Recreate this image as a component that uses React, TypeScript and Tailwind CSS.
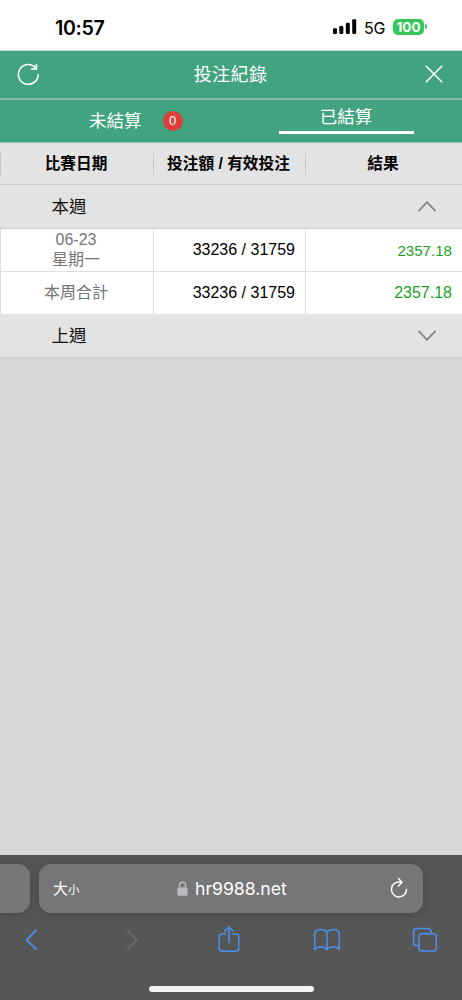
import type { ReactNode } from 'react'
import clsx from 'clsx'

interface BetRow {
  label: string[]
  stake: string
  result: string
  small?: boolean
}

const ROWS: BetRow[] = [
  { label: ['06-23', '星期一'], stake: '33236 / 31759', result: '2357.18', small: true },
  { label: ['本周合計'], stake: '33236 / 31759', result: '2357.18' },
]

function StatusBar() {
  return (
    <div className="flex h-[51px] items-center border-b border-[#c4dfd5] bg-white pt-[6px] text-black">
      <span className="ml-[55px] w-[278px] font-['Inter'] text-[19.6px] leading-6 font-semibold tracking-[-0.3px]">
        10:57
      </span>
      <svg width="24" height="16" viewBox="0 0 24 16" className="-mt-[2px]">
        <rect x="0" y="9.3" width="4" height="5.7" rx="1.2" />
        <rect x="6.3" y="7" width="4" height="8" rx="1.2" />
        <rect x="12.8" y="3.7" width="4" height="11.3" rx="1.2" />
        <rect x="19.2" y="0.3" width="4" height="14.7" rx="1.2" />
      </svg>
      <span className="ml-[7px] w-[29px] font-['Inter'] text-[16px] leading-5 tracking-[-0.3px]">5G</span>
      <span className="-mt-[3px] flex h-4 w-[31px] items-center justify-center rounded-[5px] bg-[#34c759] font-['Inter'] text-[13.5px] leading-4 font-bold text-white">
        100
      </span>
      <span className="-mt-[3px] ml-px h-[5px] w-[2px] rounded-r-full bg-[#34c759]" />
    </div>
  )
}

function Header() {
  return (
    <header className="flex h-[49px] items-center justify-between border-b-2 border-[#93b8aa] bg-[#41a380] pr-[19px] pl-[17px] text-white">
      <svg width="23" height="23" viewBox="0 0 23 23" fill="none" stroke="currentColor" strokeWidth="1.6" className="-mt-px">
        <path d="M21.2 11.3A9.9 9.9 0 1 1 18.7 4.8" />
        <path d="M14.2 5.9h5.2V1" />
      </svg>
      <h1 className="-ml-[4px] text-[18px] leading-6 tracking-[0.4px]">投注紀錄</h1>
      <svg width="18" height="18" viewBox="0 0 18 18" fill="none" stroke="currentColor" strokeWidth="1.6" className="-mt-px">
        <path d="M0.8 0.8l16.4 16.4M17.2 0.8L0.8 17.2" />
      </svg>
    </header>
  )
}

function Tabs() {
  return (
    <nav className="flex h-[43px] border-b border-[#8cc5b0] bg-[#41a380] text-[17.5px] leading-6 text-white">
      <div className="flex w-1/2 items-center pl-[89px]">
        <span className="-mt-px">未結算</span>
        <span className="ml-[21px] flex size-[20px] items-center justify-center rounded-full bg-[#dc3f3a] text-[13px]">
          0
        </span>
      </div>
      <div className="flex w-1/2 flex-col items-center pt-[5px]">
        <span className="pr-px">已結算</span>
        <span className="mt-[2px] h-[3px] w-[135px] bg-white" />
      </div>
    </nav>
  )
}

function TableHead() {
  return (
    <div className="flex h-[42px] border-b border-[#cbcbcb] bg-[#e3e3e3] pt-[10px] text-[15.7px] leading-[22px] font-bold text-black">
      <div className="h-[22px] w-[153px] border-l border-[#c6c6c6] pr-[2px] text-center">比賽日期</div>
      <div className="h-[22px] w-[152px] border-l border-[#c6c6c6] pr-[2px] text-center whitespace-nowrap">
        投注額 / 有效投注
      </div>
      <div className="h-[22px] w-[157px] border-l border-[#c6c6c6] pr-[2px] text-center">結果</div>
    </div>
  )
}

function WeekBar({ title, open }: { title: string; open?: boolean }) {
  return (
    <div className="flex h-[44px] items-center justify-between border-b border-[#cbcbcb] bg-[#e3e3e3] pr-[26px] pl-[51.500px]">
      <span className="text-[17.5px] leading-6 text-[#111]">{title}</span>
      <svg width="18" height="11" viewBox="0 0 18 11" fill="none" stroke="#858585" strokeWidth="1.8">
        <path d={open ? 'M0.5 10L9 1.2l8.5 8.8' : 'M0.5 1L9 9.8l8.5-8.8'} />
      </svg>
    </div>
  )
}

function BetTable() {
  return (
    <div className="bg-white text-[16px]">
      {ROWS.map((row, i) => (
        <div key={i} className={clsx('flex', i === 0 ? 'h-[43px] border-b border-[#dedede]' : 'h-[42px]')}>
          <div className="flex w-[153px] flex-col items-center justify-center border-l border-[#dcdcdc] pr-[2px] leading-[20px] text-[#757575]">
            {row.label.map((line) => (
              <span key={line}>{line}</span>
            ))}
          </div>
          <div className="flex w-[152px] items-center justify-end border-l border-[#dedede] pr-[10px] text-black">
            {row.stake}
          </div>
          <div
            className={clsx(
              'flex w-[157px] items-center justify-end border-l border-[#dedede] pr-[10px] text-[#1b9f1b]',
              row.small && 'pt-[2px] text-[15.1px]'
            )}
          >
            {row.result}
          </div>
        </div>
      ))}
    </div>
  )
}

function ToolIcon({ children, className }: { children: ReactNode; className?: string }) {
  return (
    <svg
      width="28"
      height="30"
      viewBox="0 0 28 30"
      fill="none"
      stroke="currentColor"
      strokeWidth="1.5"
      strokeLinecap="round"
      strokeLinejoin="round"
      className={className}
    >
      {children}
    </svg>
  )
}

function BrowserBar() {
  return (
    <footer className="h-[145px] overflow-hidden bg-[#565656]">
      <div className="flex gap-[9px] pt-[9px]">
        <div className="h-[49px] w-[30px] rounded-r-[12px] bg-[#767676] shadow-[0_1px_10px_rgba(0,0,0,0.16)]" />
        <div className="flex h-[49px] w-[384px] items-center rounded-[12px] bg-[#767676] pr-[15px] pl-[14px] text-white shadow-[0_1px_10px_rgba(0,0,0,0.16)]">
          <span className="w-[124px] pt-px leading-5">
            <span className="text-[15px]">大</span>
            <span className="text-[11.5px]">小</span>
          </span>
          <svg width="11" height="15" viewBox="0 0 11 15" className="-mt-px">
            <path d="M2.5 7V4.2a3 3 0 0 1 6 0V7" fill="none" stroke="#bcbac1" strokeWidth="1.4" />
            <rect x="0.3" y="6.5" width="10.4" height="8.2" rx="1.5" fill="#bcbac1" />
          </svg>
          <span className="ml-[7px] font-['Inter'] text-[17.6px] leading-6">hr9988.net</span>
          <svg
            width="18"
            height="21"
            viewBox="0 0 18 21"
            fill="none"
            stroke="currentColor"
            strokeWidth="1.5"
            strokeLinecap="round"
            strokeLinejoin="round"
            className="-mt-[3px] ml-auto"
          >
            <path d="M11.3 5.3A7.5 7.5 0 1 0 16.5 12.400" />
            <path d="M8.400 1.600L12 5.300 8.400 9" />
          </svg>
        </div>
      </div>

      <div className="mt-[12px] flex h-[30px] text-[#4990f2]">
        <ToolIcon className="ml-[17px]">
          <path d="M19 5.500l-9.500 9.300 9.500 9.300" strokeWidth="1.8" />
        </ToolIcon>
        <ToolIcon className="ml-[73px] text-[#6c6c6c]">
          <path d="M9.500 5.500l9.500 9.300-9.500 9.300" strokeWidth="1.7" />
        </ToolIcon>
        <ToolIcon className="ml-[69px]">
          <path d="M10.500 9H7.200a3 3 0 0 0-3 3v11.200a3 3 0 0 0 3 3h13.600a3 3 0 0 0 3-3V12a3 3 0 0 0-3-3h-3.300" />
          <path d="M14 17.500V2.200M9.700 6.300L14 2l4.300 4.300" />
        </ToolIcon>
        <ToolIcon className="ml-[70px]">
          <path d="M14 7.200C11.500 3.700 4.500 3.700 1.700 7.200v17C4.500 21.300 11.500 21.300 14 24.600c2.500-3.300 9.500-3.300 12.300-.4v-17C23.500 3.700 16.500 3.700 14 7.200v17.400" />
        </ToolIcon>
        <ToolIcon className="ml-[70px]">
          <rect x="8" y="8.800" width="17.300" height="17.200" rx="2.800" />
          <path d="M8 20.600H5.400a2.800 2.800 0 0 1-2.800-2.800V6.300a2.800 2.800 0 0 1 2.800-2.800h11.700a2.800 2.800 0 0 1 2.800 2.800v2.500" />
        </ToolIcon>
      </div>
      <div className="mx-auto mt-[31px] h-[6px] w-[165px] rounded-full bg-[#f2f2f2]" />
    </footer>
  )
}

export default function App() {
  return (
    <div className="flex h-[1000px] w-[462px] flex-col overflow-hidden bg-[#d8d8d8] font-['Liberation_Sans','Noto_Sans_CJK_TC',sans-serif]">
      <StatusBar />
      <Header />
      <Tabs />
      <main className="flex-1">
        <TableHead />
        <WeekBar title="本週" open />
        <BetTable />
        <WeekBar title="上週" />
      </main>
      <BrowserBar />
    </div>
  )
}
